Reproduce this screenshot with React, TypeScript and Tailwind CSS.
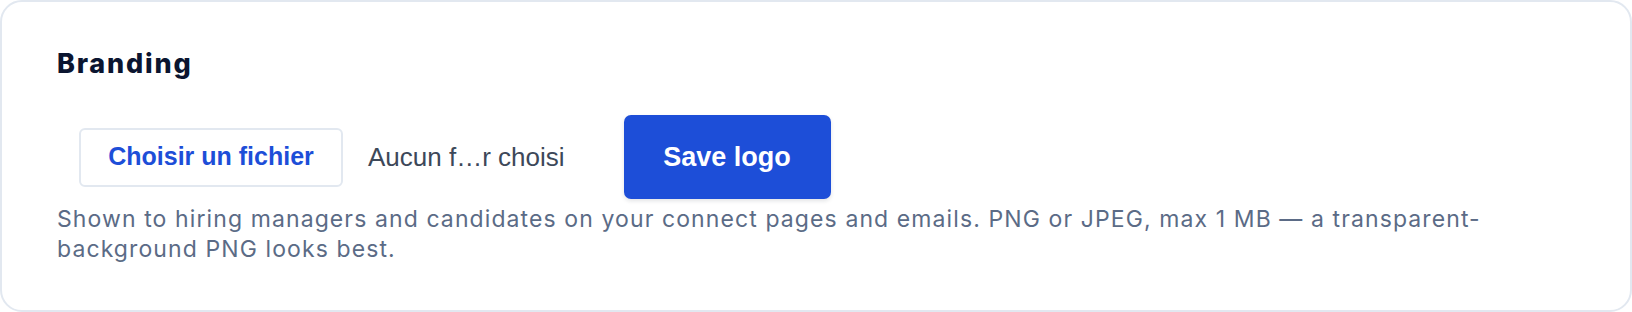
export default function App() {
  return (
    <div className="h-[312px] w-[1632px] bg-white">
      <section className="h-full w-full rounded-[22px] border-2 border-[#e2e8f0] bg-white pb-[46px] pl-[55px] pr-[55px] pt-[44px]">
        <h2 className="font-['Inter',sans-serif] text-[27px] font-extrabold leading-[36px] tracking-[1.8px] text-[#0b1530]">
          Branding
        </h2>

        {/* Logo upload */}
        <div className="mt-[33px] flex h-[84px] items-center pl-[22px]">
          <button className="flex h-[59px] w-[264px] items-center justify-center rounded-[6px] border-2 border-[#e2e8f0] bg-white font-['Liberation_Sans',sans-serif] text-[25px] font-bold text-[#1d4ed8]">
            Choisir un fichier
          </button>
          <span className="ml-[25px] font-['Liberation_Sans',sans-serif] text-[26px] text-[#3d4859]">
            Aucun f…r choisi
          </span>
          <button className="ml-[59px] flex h-[84px] w-[207px] items-center justify-center rounded-[7px] bg-[#1d4ed8] font-['Liberation_Sans',sans-serif] text-[27px] font-bold text-white shadow-[0_2px_4px_rgba(15,23,42,0.12)]">
            Save logo
          </button>
        </div>

        <p className="mt-[5px] font-['Inter',sans-serif] text-[23px] leading-[30px] tracking-[1.1px] text-[#5b6b86]">
          Shown to hiring managers and candidates on your connect pages and emails. PNG or JPEG, max 1 MB — a transparent-background PNG looks best.
        </p>
      </section>
    </div>
  );
}
